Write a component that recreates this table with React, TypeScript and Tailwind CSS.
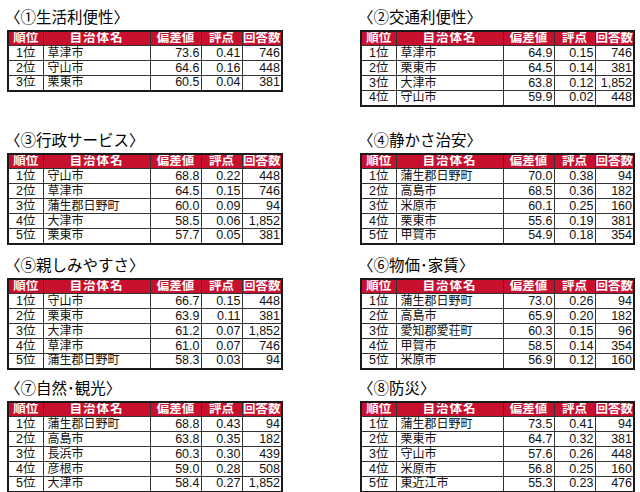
type Row = [string, string, string, string]

const sections: { title: string; rows: Row[] }[] = [
  {
    title: '〈①生活利便性〉',
    rows: [
      ['草津市', '73.6', '0.41', '746'],
      ['守山市', '64.6', '0.16', '448'],
      ['栗東市', '60.5', '0.04', '381'],
    ],
  },
  {
    title: '〈②交通利便性〉',
    rows: [
      ['草津市', '64.9', '0.15', '746'],
      ['栗東市', '64.5', '0.14', '381'],
      ['大津市', '63.8', '0.12', '1,852'],
      ['守山市', '59.9', '0.02', '448'],
    ],
  },
  {
    title: '〈③行政サービス〉',
    rows: [
      ['守山市', '68.8', '0.22', '448'],
      ['草津市', '64.5', '0.15', '746'],
      ['蒲生郡日野町', '60.0', '0.09', '94'],
      ['大津市', '58.5', '0.06', '1,852'],
      ['栗東市', '57.7', '0.05', '381'],
    ],
  },
  {
    title: '〈④静かさ治安〉',
    rows: [
      ['蒲生郡日野町', '70.0', '0.38', '94'],
      ['高島市', '68.5', '0.36', '182'],
      ['米原市', '60.1', '0.25', '160'],
      ['栗東市', '55.6', '0.19', '381'],
      ['甲賀市', '54.9', '0.18', '354'],
    ],
  },
  {
    title: '〈⑤親しみやすさ〉',
    rows: [
      ['守山市', '66.7', '0.15', '448'],
      ['栗東市', '63.9', '0.11', '381'],
      ['大津市', '61.2', '0.07', '1,852'],
      ['草津市', '61.0', '0.07', '746'],
      ['蒲生郡日野町', '58.3', '0.03', '94'],
    ],
  },
  {
    title: '〈⑥物価･家賃〉',
    rows: [
      ['蒲生郡日野町', '73.0', '0.26', '94'],
      ['高島市', '65.9', '0.20', '182'],
      ['愛知郡愛荘町', '60.3', '0.15', '96'],
      ['甲賀市', '58.5', '0.14', '354'],
      ['米原市', '56.9', '0.12', '160'],
    ],
  },
  {
    title: '〈⑦自然･観光〉',
    rows: [
      ['蒲生郡日野町', '68.8', '0.43', '94'],
      ['高島市', '63.8', '0.35', '182'],
      ['長浜市', '60.3', '0.30', '439'],
      ['彦根市', '59.0', '0.28', '508'],
      ['大津市', '58.4', '0.27', '1,852'],
    ],
  },
  {
    title: '〈⑧防災〉',
    rows: [
      ['蒲生郡日野町', '73.5', '0.41', '94'],
      ['栗東市', '64.7', '0.32', '381'],
      ['守山市', '57.6', '0.26', '448'],
      ['米原市', '56.8', '0.25', '160'],
      ['東近江市', '55.3', '0.23', '476'],
    ],
  },
]

const th = 'border border-[#333] p-0 whitespace-nowrap overflow-hidden'
const td = 'border border-[#333] py-0 whitespace-nowrap overflow-hidden'

function RankTable({ title, rows }: { title: string; rows: Row[] }) {
  return (
    <div>
      <h2 className="h-[24px] text-[15.5px] leading-[24px] text-black -ml-[2px] whitespace-nowrap">{title}</h2>
      <table className="w-full table-fixed border-collapse border-2 border-[#1a1a1a] leading-[13px]">
        <colgroup>
          <col className="w-[35px]" />
          <col className="w-[107px]" />
          <col className="w-[51px]" />
          <col className="w-[41px]" />
          <col />
        </colgroup>
        <thead>
          <tr className="h-[14px] bg-[#c8102e] text-white font-bold text-[12.5px]">
            <th className={th}>順位</th>
            <th className={`${th} tracking-[1px]`}>自治体名</th>
            <th className={th}>偏差値</th>
            <th className={th}>評点</th>
            <th className={th}>回答数</th>
          </tr>
        </thead>
        <tbody>
          {rows.map((r, i) => (
            <tr key={i} className="h-[15px] text-[#111] text-[12.5px]">
              <td className={`${td} px-0 text-center`}>{i + 1}位</td>
              <td className={`${td} pl-[4px] text-[12px]`}>{r[0]}</td>
              <td className={`${td} pr-[1px] text-right`}>{r[1]}</td>
              <td className={`${td} pr-[1px] text-right`}>{r[2]}</td>
              <td className={`${td} pr-[1px] text-right`}>{r[3]}</td>
            </tr>
          ))}
        </tbody>
      </table>
    </div>
  )
}

export default function App() {
  return (
    <div
      className="w-[640px] h-[492px] overflow-hidden bg-white pl-[7px] pt-[6px]"
      style={{ fontFamily: '"Liberation Sans", "Noto Sans CJK JP", sans-serif' }}
    >
      <div className="grid grid-cols-[276px_275px] grid-rows-[123px_125px_123px_auto] gap-x-[77px]">
        {sections.map((s) => (
          <RankTable key={s.title} title={s.title} rows={s.rows} />
        ))}
      </div>
    </div>
  )
}
